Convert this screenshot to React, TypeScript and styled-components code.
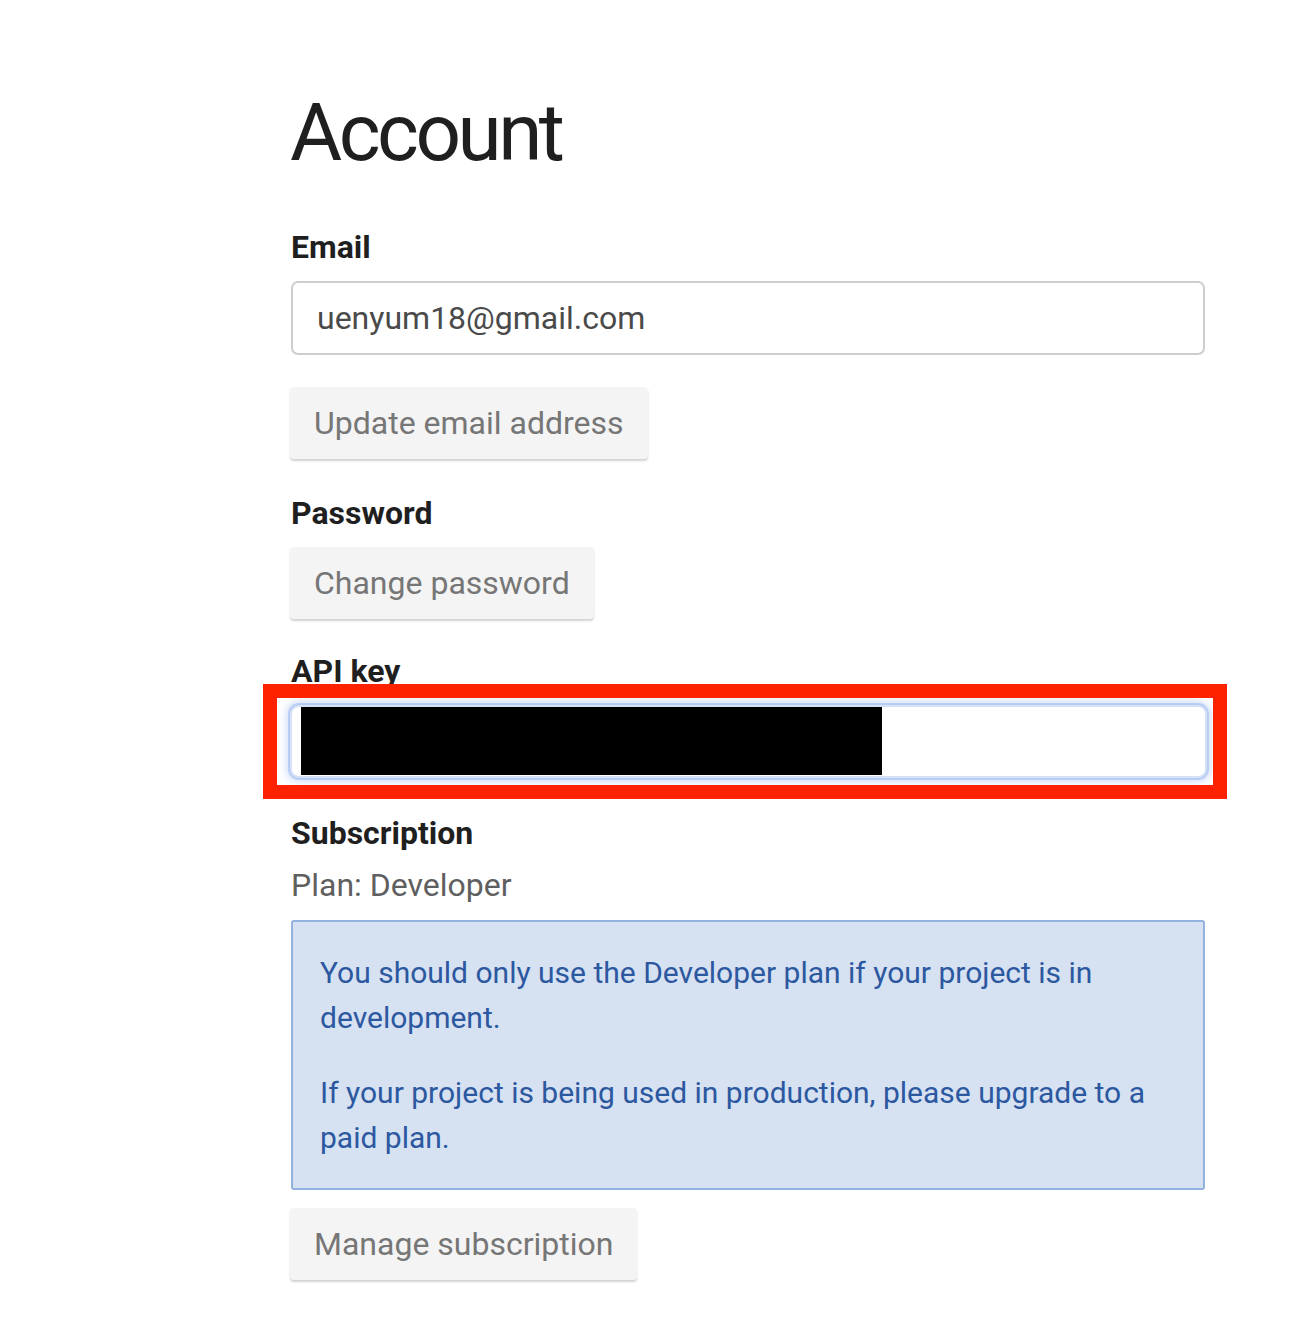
import React from "react";
import styled, { createGlobalStyle } from "styled-components";

const Global = createGlobalStyle`
  html, body { margin: 0; padding: 0; background: #ffffff; }
  body { font-family: Roboto, "Liberation Sans", Arial, sans-serif; color: #202124; }
`;

const Page = styled.main`
  width: 915px;
  padding: 85px 0 40px 290px;
`;

const Title = styled.h1`
  margin: 0 0 42px 0;
  font-family: Roboto, "Liberation Sans", sans-serif;
  font-weight: 400;
  font-size: 80px;
  line-height: 96px;
  color: #1f1f1f;
  letter-spacing: -3.5px;
`;

const Label = styled.h2<{ $top?: number }>`
  margin: ${(p) => p.$top ?? 0}px 0 10px 1px;
  font-size: 32px;
  line-height: 48px;
  font-weight: 700;
  color: #1f1f1f;
`;

const TextField = styled.div`
  box-sizing: border-box;
  height: 74px;
  margin-left: 1px;
  border: 2px solid #cdcdcd;
  border-radius: 7px;
  padding: 0 24px;
  display: flex;
  align-items: center;
  font-size: 32px;
  color: #4a4a4a;
`;

const Button = styled.button<{ $top?: number }>`
  display: inline-flex;
  align-items: center;
  height: 72px;
  margin-top: ${(p) => p.$top ?? 0}px;
  padding: 0 24px;
  border: none;
  border-radius: 4px;
  background: #f4f4f4;
  box-shadow: 0 2px 2px rgba(0, 0, 0, 0.18);
  font-family: Roboto, "Liberation Sans", sans-serif;
  font-size: 32px;
  color: #767676;
`;

const KeyWrap = styled.div`
  position: relative;
  width: 917px;
`;

const KeyField = styled.div`
  box-sizing: border-box;
  height: 73px;
  border: 2px solid #d6e2f8;
  border-radius: 9px;
  background: #ffffff;
  box-shadow: 0 0 0 2px rgba(160, 190, 240, 0.6), 0 0 8px 3px rgba(130, 165, 235, 0.45);
`;

const Redaction = styled.div`
  position: absolute;
  left: 11px;
  top: 2px;
  width: 581px;
  height: 68px;
  background: #000000;
`;

const Highlight = styled.div`
  position: absolute;
  left: -27px;
  top: -21px;
  right: -20px;
  bottom: -21px;
  border: 14px solid #ff2200;
  pointer-events: none;
`;

const Plan = styled.p`
  margin: -6px 0 11px 1px;
  font-size: 32px;
  line-height: 48px;
  color: #5f5f5f;
`;

const Notice = styled.div`
  box-sizing: border-box;
  margin-left: 1px;
  border: 2px solid #94b2e0;
  border-radius: 3px;
  background: #d6e1f2;
  padding: 28px 28px 28px 27px;
`;

const NoticeText = styled.p`
  margin: 0 0 30px 0;
  font-size: 30px;
  line-height: 45px;
  color: #2c58a0;
  &:last-child { margin-bottom: 0; }
`;

export default function App() {
  return (
    <>
      <Global />
      <Page>
        <Title>Account</Title>

        <Label>Email</Label>
        <TextField>uenyum18@gmail.com</TextField>
        <Button $top={32}>Update email address</Button>

        <Label $top={30}>Password</Label>
        <Button>Change password</Button>

        <Label $top={28}>API key</Label>
        <KeyWrap>
          <KeyField />
          <Redaction />
          <Highlight />
        </KeyWrap>

        <Label $top={31}>Subscription</Label>
        <Plan>Plan: Developer</Plan>
        <Notice>
          <NoticeText>
            You should only use the Developer plan if your project is in development.
          </NoticeText>
          <NoticeText>
            If your project is being used in production, please upgrade to a paid plan.
          </NoticeText>
        </Notice>
        <Button $top={18}>Manage subscription</Button>
      </Page>
    </>
  );
}
